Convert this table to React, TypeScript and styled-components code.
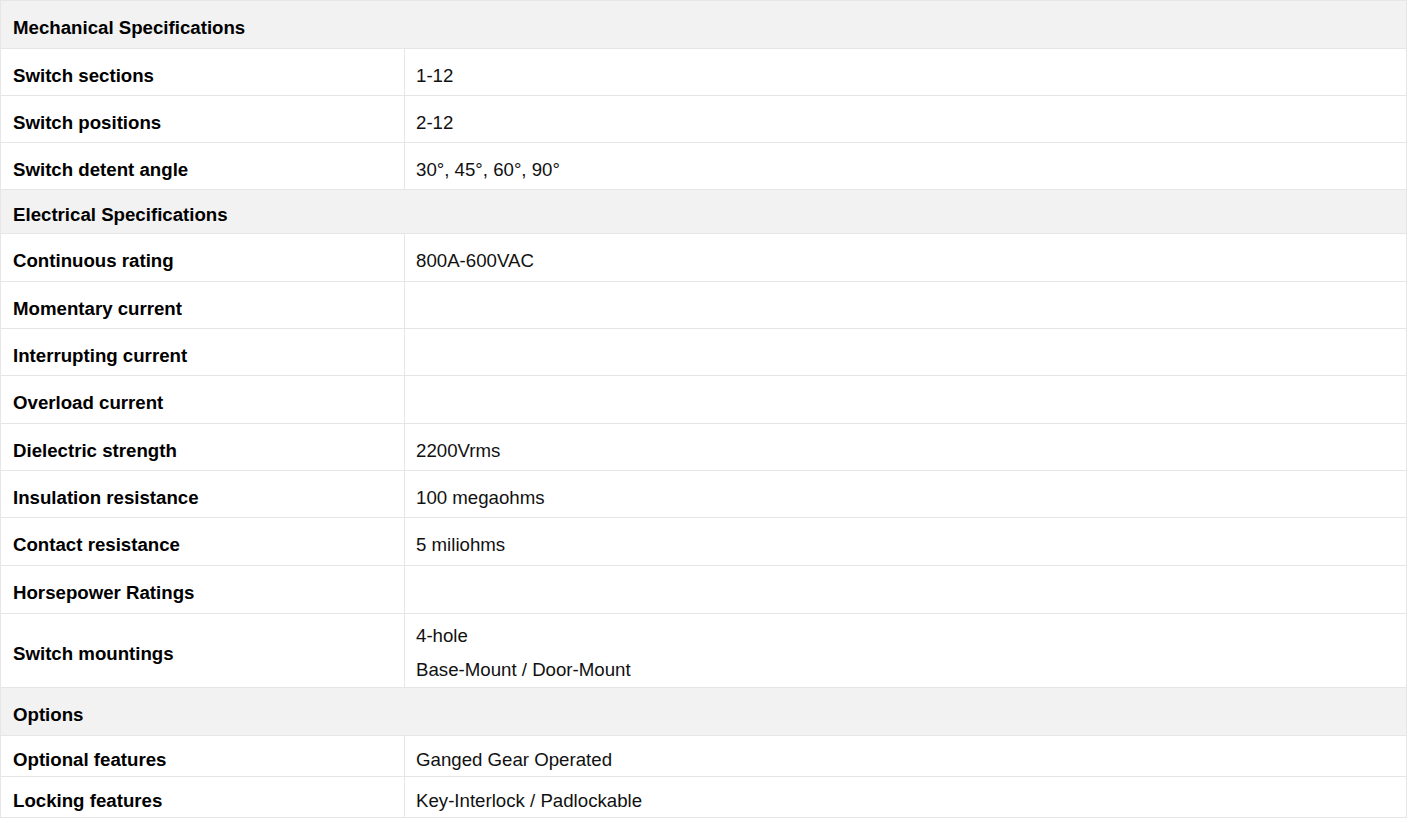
import styled, { createGlobalStyle } from 'styled-components';

const GlobalStyle = createGlobalStyle`
  body {
    margin: 0;
    background: #ffffff;
    font-family: "Liberation Sans", Arial, sans-serif;
  }
`;

const Table = styled.table`
  width: 1407px;
  border-collapse: collapse;
  font-family: "Liberation Sans", Arial, sans-serif;
  font-size: 18.67px;
  color: #111111;
`;

const Row = styled.tr<{ $h: number }>`
  height: ${(p) => p.$h}px;
`;

const SectionCell = styled.td`
  background-color: #f2f2f2;
  border: 1px solid #e6e6e6;
  padding: 7px 12px 0;
  font-weight: bold;
  color: #000000;
  vertical-align: middle;
`;

const Label = styled.td`
  width: 379px;
  border: 1px solid #e6e6e6;
  padding: 7px 12px 0;
  font-weight: bold;
  color: #000000;
  vertical-align: middle;
`;

const Value = styled.td<{ $multi?: boolean }>`
  border: 1px solid #e6e6e6;
  padding: ${(p) => (p.$multi ? '4px 11px 0' : '7px 11px 0')};
  vertical-align: middle;
`;

const Line = styled.div<{ $tall?: boolean }>`
  line-height: ${(p) => (p.$tall ? '34px' : 'normal')};
`;

type Item = { label: string; value?: string[]; h: number };
type Section = { title: string; h: number; items: Item[] };

const sections: Section[] = [
  {
    title: 'Mechanical Specifications',
    h: 48,
    items: [
      { label: 'Switch sections', value: ['1-12'], h: 47 },
      { label: 'Switch positions', value: ['2-12'], h: 47 },
      { label: 'Switch detent angle', value: ['30°, 45°, 60°, 90°'], h: 47 },
    ],
  },
  {
    title: 'Electrical Specifications',
    h: 44,
    items: [
      { label: 'Continuous rating', value: ['800A-600VAC'], h: 48 },
      { label: 'Momentary current', h: 47 },
      { label: 'Interrupting current', h: 47 },
      { label: 'Overload current', h: 48 },
      { label: 'Dielectric strength', value: ['2200Vrms'], h: 47 },
      { label: 'Insulation resistance', value: ['100 megaohms'], h: 47 },
      { label: 'Contact resistance', value: ['5 miliohms'], h: 48 },
      { label: 'Horsepower Ratings', h: 48 },
      { label: 'Switch mountings', value: ['4-hole', 'Base-Mount / Door-Mount'], h: 74 },
    ],
  },
  {
    title: 'Options',
    h: 48,
    items: [
      { label: 'Optional features', value: ['Ganged Gear Operated'], h: 41 },
      { label: 'Locking features', value: ['Key-Interlock / Padlockable'], h: 41 },
    ],
  },
];

export default function App() {
  return (
    <>
      <GlobalStyle />
      <Table>
        <tbody>
          {sections.map((s) => {
            const rows = [
              <Row key={s.title} $h={s.h}>
                <SectionCell colSpan={2}>{s.title}</SectionCell>
              </Row>,
            ];
            s.items.forEach((it) => {
              const multi = (it.value?.length ?? 0) > 1;
              rows.push(
                <Row key={it.label} $h={it.h}>
                  <Label>{it.label}</Label>
                  <Value $multi={multi}>
                    {it.value?.map((v) => (
                      <Line key={v} $tall={multi}>
                        {v}
                      </Line>
                    ))}
                  </Value>
                </Row>
              );
            });
            return rows;
          })}
        </tbody>
      </Table>
    </>
  );
}
